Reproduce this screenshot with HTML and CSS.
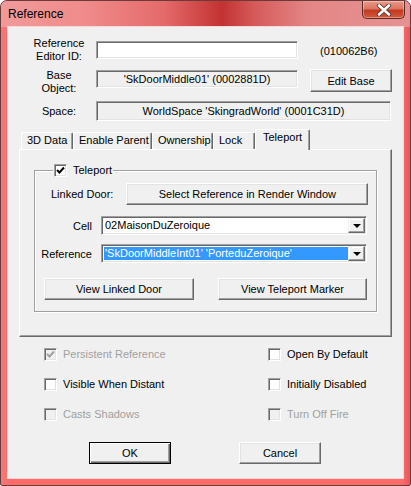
FILE: index.html
```html
<!DOCTYPE html>
<html>
<head>
<meta charset="utf-8">
<link rel="stylesheet" href="styles.css">
</head>
<body>
<div class="window">
  <div class="titlebar">
    <span class="title">Reference</span>
    <div class="close">
      <svg width="18" height="12" viewBox="0 0 18 12"><path d="M4 1.5 L14 10.5 M14 1.5 L4 10.5" stroke="#4a3030" stroke-width="4.2" stroke-linecap="round"/><path d="M4 1.5 L14 10.5 M14 1.5 L4 10.5" stroke="#fff" stroke-width="2.6" stroke-linecap="round"/></svg>
    </div>
  </div>
  <div class="client">
    <div class="top">
      <div class="row row1">
        <div class="lbl">Reference<br>Editor ID:</div>
        <div class="field white f1"></div>
        <div class="formid">(010062B6)</div>
      </div>
      <div class="row row2">
        <div class="lbl">Base<br>Object:</div>
        <div class="field f2">'SkDoorMiddle01' (0002881D)</div>
        <div class="btn editbase">Edit Base</div>
      </div>
      <div class="row row3">
        <div class="lbl one">Space:</div>
        <div class="field f3">WorldSpace 'SkingradWorld' (0001C31D)</div>
      </div>
    </div>

    <div class="tabs">
      <div class="tab t1">3D Data</div>
      <div class="tab t2">Enable Parent</div>
      <div class="tab t3">Ownership</div>
      <div class="tab t4">Lock</div>
      <div class="tab sel">Teleport</div>
    </div>
    <div class="panel">
      <div class="group">
        <div class="legend"><span class="cb checked"><svg width="9" height="9" viewBox="0 0 9 9"><path d="M1 4 L3.5 6.5 L8 1.5" fill="none" stroke="#000" stroke-width="2"/></svg></span><span class="legtxt">Teleport</span></div>
        <div class="grow lr">
          <div class="glbl ld">Linked Door:</div>
          <div class="btn selref">Select Reference in Render Window</div>
        </div>
        <div class="grow cr">
          <div class="glbl">Cell</div>
          <div class="combo"><div class="ctext">02MaisonDuZeroique</div><div class="drop"><span class="arrow"></span></div></div>
        </div>
        <div class="grow rr">
          <div class="glbl">Reference</div>
          <div class="combo"><div class="ctext hl">'SkDoorMiddleInt01' 'PorteduZeroique'</div><div class="drop"><span class="arrow"></span></div></div>
        </div>
        <div class="grow br">
          <div class="btn vld">View Linked Door</div>
          <div class="btn vtm">View Teleport Marker</div>
        </div>
      </div>
    </div>

    <div class="checks">
      <div class="chk dis"><span class="cb checked"><svg width="9" height="9" viewBox="0 0 9 9"><path d="M1 4 L3.5 6.5 L8 1.5" fill="none" stroke="#a0a0a0" stroke-width="2"/></svg></span><span>Persistent Reference</span></div>
      <div class="chk"><span class="cb"></span><span>Open By Default</span></div>
      <div class="chk"><span class="cb"></span><span>Visible When Distant</span></div>
      <div class="chk"><span class="cb"></span><span>Initially Disabled</span></div>
      <div class="chk dis"><span class="cb"></span><span>Casts Shadows</span></div>
      <div class="chk dis"><span class="cb"></span><span>Turn Off Fire</span></div>
    </div>

    <div class="actions">
      <div class="btn def">OK</div>
      <div class="btn cancel">Cancel</div>
    </div>
  </div>
</div>
</body>
</html>
```

FILE: styles.css
```css
* { box-sizing: border-box; }
html, body { margin: 0; padding: 0; }
body {
  width: 411px;
  height: 486px;
  overflow: hidden;
  background: #ffffff;
  font-family: "Liberation Sans", Arial, sans-serif;
  font-size: 11px;
  color: #000;
}
.window {
  width: 411px;
  height: 486px;
  border-radius: 7px 7px 2px 2px;
  background: linear-gradient(90deg, #f07b7b 0%, #ff6b6b 2%, #ff6b6b 98%, #e05a5a 100%);
  border: 1px solid #6b3a3a;
  overflow: hidden;
}
.titlebar {
  height: 26px;
  display: flex;
  align-items: flex-start;
  margin: 0 -1px;
  background: linear-gradient(90deg, #f19a9a 0%, #f08c8c 20%, #e56a6a 40%, #c33232 54%, #d65a5a 62%, #e48686 75%, #e59292 100%);
}
.title {
  font-family: "Liberation Sans", Arial, sans-serif;
  font-size: 12px;
  color: #000;
  padding: 6px 0 0 8px;
  line-height: 15px;
}
.close {
  margin-left: auto;
  margin-right: 6px;
  width: 43px;
  height: 18px;
  border: 1px solid #5a2a2a;
  border-top: none;
  border-radius: 0 0 5px 5px;
  background: linear-gradient(180deg, #e99a88 0%, #dc7563 45%, #c23a1f 55%, #d2583c 100%);
  box-shadow: inset 0 0 0 1px rgba(255,255,255,0.35);
  display: flex;
  align-items: center;
  justify-content: center;
}
.client {
  margin: 0 7px;
  width: 395px;
  height: 451px;
  background: #f0f0f0;
  box-shadow: 0 0 0 1px #f6d6d6;
}

/* generic 3d */
.field {
  height: 18px;
  border: 1px solid;
  border-color: #a0a0a0 #ffffff #ffffff #a0a0a0;
  box-shadow: inset 1px 1px 0 #696969, inset -1px -1px 0 #e3e3e3;
  background: #f0f0f0;
  text-align: center;
  line-height: 16px;
  white-space: nowrap;
  overflow: hidden;
}
.field.white { background: #fff; }
.btn {
  border: 1px solid;
  border-color: #ffffff #696969 #696969 #ffffff;
  box-shadow: inset -1px -1px 0 #a0a0a0, inset 1px 1px 0 #e3e3e3;
  background: #f0f0f0;
  display: flex;
  align-items: center;
  justify-content: center;
  white-space: nowrap;
}

/* top rows */
.top { padding: 10px 0 0 21px; }
.row { display: flex; align-items: flex-start; }
.lbl {
  width: 60px;
  text-align: center;
  line-height: 13px;
  margin-right: 7px;
}
.row1 { height: 26px; }
.f1 { width: 202px; margin-top: 4px; }
.formid { margin-left: 22px; margin-top: 8px; line-height: 13px; }
.row2 { margin-top: 6px; height: 26px; }
.f2 { width: 202px; margin-top: 1px; }
.editbase { width: 82px; height: 23px; margin-left: 12px; }
.row3 { margin-top: 6px; }
.lbl.one { margin-top: 4px; }
.f3 { width: 295px; height: 20px; line-height: 18px; }

/* tabs */
.tabs {
  display: flex;
  align-items: flex-end;
  margin: 8px 0 0 13px;
  height: 20px;
  position: relative;
  z-index: 1;
}
.tab {
  height: 17px;
  border-top: 1px solid #fff;
  border-left: 1px solid #fff;
  border-right: 1px solid #696969;
  box-shadow: inset -1px 0 0 #a0a0a0;
  border-radius: 2px 2px 0 0;
  padding-left: 5px;
  line-height: 15px;
  margin-bottom: 0;
}
.t1 { width: 52px; }
.t2 { width: 79px; }
.t3 { width: 61px; }
.t4 { width: 42px; }
.tab.sel {
  width: 55px;
  height: 21px;
  margin-bottom: -1px;
  background: #f0f0f0;
  padding-left: 7px;
  line-height: 14px;
}
.panel {
  margin-left: 11px;
  width: 373px;
  height: 188px;
  border: 1px solid;
  border-color: #ffffff #696969 #696969 #ffffff;
  box-shadow: inset -1px -1px 0 #a0a0a0;
  padding: 20px 0 0 14px;
}
.group {
  width: 343px;
  height: 142px;
  border: 1px solid #a0a0a0;
  box-shadow: inset 1px 1px 0 #fff, 1px 1px 0 #fff;
  padding: 0 0 0 0;
}
.legend {
  display: flex;
  align-items: center;
  margin: -7px 0 0 18px;
  width: 60px;
  height: 13px;
  background: #f0f0f0;
  padding-left: 1px;
}
.legtxt { margin-left: 6px; line-height: 13px; }
.grow { display: flex; align-items: center; }
.glbl { width: 57px; text-align: right; margin-right: 9px; }
.lr { margin-top: 6px; height: 22px; }
.ld { width: auto; text-align: left; margin: 0 13px 0 16px; }
.selref { width: 242px; height: 22px; margin-left: 0; }
.cr { margin-top: 11px; height: 19px; }
.rr { margin-top: 9px; height: 19px; }
.combo {
  width: 266px;
  height: 19px;
  display: flex;
  border: 1px solid;
  border-color: #a0a0a0 #ffffff #ffffff #a0a0a0;
  box-shadow: inset 1px 1px 0 #696969, inset -1px -1px 0 #e3e3e3;
  background: #fff;
  padding: 2px 2px 2px 2px;
}
.ctext {
  flex: 1;
  line-height: 13px;
  padding-left: 1px;
  white-space: nowrap;
  overflow: hidden;
}
.ctext.hl { background: #3399ff; color: #fff; }
.drop {
  width: 17px;
  height: 15px;
  margin: -1px -1px 0 0;
  border: 1px solid;
  border-color: #f0f0f0 #696969 #696969 #f0f0f0;
  box-shadow: inset -1px -1px 0 #a0a0a0, inset 1px 1px 0 #fff;
  background: #f0f0f0;
  display: flex;
  align-items: center;
  justify-content: center;
}
.arrow {
  width: 0;
  height: 0;
  border-left: 4px solid transparent;
  border-right: 4px solid transparent;
  border-top: 4px solid #000;
  margin-top: 1px;
}
.br { margin-top: 15px; height: 22px; }
.vld { width: 150px; height: 22px; margin-left: 9px; }
.vtm { width: 149px; height: 22px; margin-left: 24px; }

/* checkboxes */
.cb {
  width: 13px;
  height: 13px;
  border: 1px solid;
  border-color: #a0a0a0 #ffffff #ffffff #a0a0a0;
  box-shadow: inset 1px 1px 0 #696969, inset -1px -1px 0 #e3e3e3;
  background: #fff;
  display: flex;
  align-items: center;
  justify-content: center;
  flex: none;
}
.checks {
  display: grid;
  grid-template-columns: 224px auto;
  row-gap: 17px;
  padding: 11px 0 0 36px;
}
.chk { display: flex; align-items: center; height: 13px; }
.chk > span:last-child { margin-left: 6px; line-height: 13px; }
.chk.dis { color: #a0a0a0; }
.chk.dis .cb { background: #f0f0f0; }

.actions {
  display: flex;
  padding: 21px 0 0 81px;
}
.actions .btn { width: 82px; height: 22px; }
.btn.def {
  border: 1px solid #000;
  box-shadow: inset 1px 1px 0 #fff, inset -1px -1px 0 #696969, inset -2px -2px 0 #a0a0a0;
}
.cancel { margin-left: 68px; }
```
